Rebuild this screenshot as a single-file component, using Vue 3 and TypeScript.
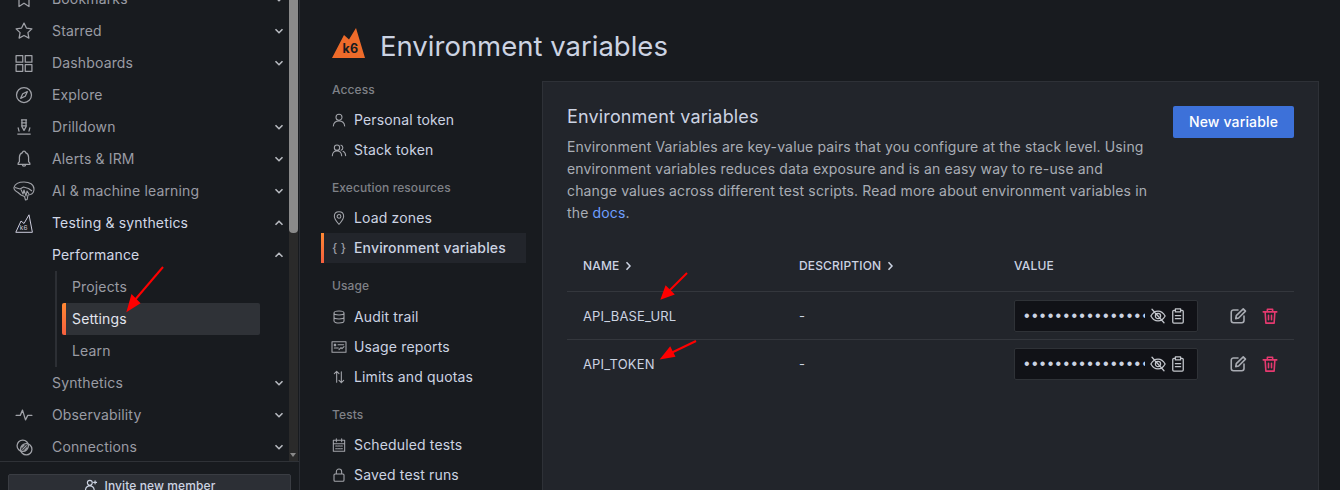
<script setup lang="ts">
interface NavItem { label: string; icon?: string; chevron?: 'up' | 'down'; active?: boolean }
const nav: NavItem[] = [
  { label: 'Bookmarks', icon: 'bookmark', chevron: 'down' },
  { label: 'Starred', icon: 'star', chevron: 'down' },
  { label: 'Dashboards', icon: 'apps', chevron: 'down' },
  { label: 'Explore', icon: 'compass' },
  { label: 'Drilldown', icon: 'drill', chevron: 'down' },
  { label: 'Alerts & IRM', icon: 'bell', chevron: 'down' },
  { label: 'AI & machine learning', icon: 'brain', chevron: 'down' },
  { label: 'Testing & synthetics', icon: 'k6', chevron: 'up', active: true },
]
const icons: Record<string, string> = {
  bookmark: 'M6 3h12v18l-6-4-6 4z',
  star: 'M12 2.500l2.900 6 6.600.9-4.800 4.600 1.200 6.500-5.900-3.100-5.900 3.100 1.200-6.500-4.800-4.600 6.600-.9z',
  apps: 'M2.500 3h8v8h-8zM13.500 3h8v8h-8zM2.500 14h8v8h-8zM13.500 14h8v8h-8z',
  compass: 'M12 3a9 9 0 1 0 0 18 9 9 0 0 0 0-18zM16 8l-2.500 5.500L8 16l2.500-5.500z',
  drill: 'M9 3.500h6M9 7h6M9 10.500h6M9.500 3v8.500l2.500 4.500 2.500-4.500V3M5 13l1 4M19 13l-1 4M4.500 20.500h15',
  bell: 'M12 2.500a1.800 1.800 0 0 1 1.800 1.800c2.500 1 3.700 3.200 3.700 5.700V15l1.500 2v1.500H5V17l1.500-2v-5c0-2.500 1.200-4.700 3.700-5.700A1.800 1.800 0 0 1 12 2.500zM10 18.500a2 2 0 0 0 4 0',
  user: 'M12 3.500a4.500 4.500 0 1 0 0 9 4.500 4.500 0 0 0 0-9zM3.500 21c.5-5 4-7.500 8.500-7.500s8 2.500 8.500 7.500',
  users: 'M9 4.500a4 4 0 1 0 0 8 4 4 0 0 0 0-8zM2 20.500c.3-4.500 3-7 7-7s6.700 2.500 7 7M15 4.700a4 4 0 0 1 0 7.600M18 14c2.400.8 3.700 3.200 4 6.500',
  pin: 'M12 2.500c-4.200 0-7 3-7 6.900 0 4.600 4.300 9 7 12.100 2.700-3.100 7-7.500 7-12.100 0-3.900-2.800-6.900-7-6.900zM12 6.800a2.800 2.800 0 1 0 0 5.600 2.800 2.800 0 0 0 0-5.600z',
  db: 'M4.500 6c0-1.700 3.300-3 7.500-3s7.500 1.300 7.500 3v12c0 1.700-3.300 3-7.500 3s-7.500-1.300-7.500-3zM4.500 6c0 1.700 3.300 3 7.500 3s7.500-1.300 7.500-3M4.500 12c0 1.700 3.300 3 7.500 3s7.500-1.300 7.500-3',
  report: 'M1.500 4h21v16h-21zM5 8h2v2H5zM10.500 8.500h8.500M5 13.500h6M12 16l3-3 1.500 1.500 3-3',
  updown: 'M8.500 20V3.500M5 7l3.500-3.500L12 7M15.500 4v16.500M12 17l3.500 3.500L19 17',
  calendar: 'M3.500 5h17v16.500h-17zM3.500 10h17M8 2.500V7M16 2.500V7M7 13.500h2.500M10.800 13.500h2.500M14.600 13.500h2.500M7 17.500h2.500M10.800 17.500h2.500M14.600 17.500h2.500',
  lock: 'M6 10.500h12a1.500 1.500 0 0 1 1.500 1.500v8a1.500 1.500 0 0 1-1.500 1.500H6A1.500 1.500 0 0 1 4.500 20v-8A1.500 1.500 0 0 1 6 10.500zM8 10.500V7a4 4 0 0 1 8 0v3.500',
}
interface SubItem { label: string; icon: string; active?: boolean }
interface SubGroup { title: string; items: SubItem[] }
const groups: SubGroup[] = [
  { title: 'Access', items: [{ label: 'Personal token', icon: 'user' }, { label: 'Stack token', icon: 'users' }] },
  { title: 'Execution resources', items: [{ label: 'Load zones', icon: 'pin' }, { label: 'Environment variables', icon: 'braces', active: true }] },
  { title: 'Usage', items: [{ label: 'Audit trail', icon: 'db' }, { label: 'Usage reports', icon: 'report' }, { label: 'Limits and quotas', icon: 'updown' }] },
  { title: 'Tests', items: [{ label: 'Scheduled tests', icon: 'calendar' }, { label: 'Saved test runs', icon: 'lock' }] },
]
const rows = ['API_BASE_URL', 'API_TOKEN']
const dots = '••••••••••••••••••••'
</script>

<template>
  <div class="page">
    <aside class="side">
      <div class="side-scroll">
        <div class="nav">
          <div v-for="n in nav" :key="n.label" class="nav-row" :class="{ on: n.active }">
            <span class="nav-icon">
              <svg v-if="n.icon === 'brain'" width="22" height="20" viewBox="0 0 22 20" fill="none" stroke="currentColor" stroke-width="1.100" stroke-linejoin="round">
                <path d="M1 6.500C2 3 6 1 11 1c5.500 0 10 2.500 10 7 0 2.800-1.500 4.800-3.500 5.500l-2.500.5-.8 4.500-1.700.5-1-3.500L8 14l-3-2.500C3 10.500.5 9 1 6.500z"/>
                <path d="M2 6.500l5 1.500 3.500-2 5 1.500 3.500 2.500M8 8.500l2 4.500 1-4 2 6 1-5 2 3"/>
              </svg>
              <svg v-else-if="n.icon === 'k6'" width="18" height="19" viewBox="0 0 18 19" fill="none" stroke="currentColor" stroke-width="1">
                <path d="M.8 18.300 6 7l3 2.500L14 .8l3.400 17.500z" stroke-linejoin="round"/>
                <text x="4.800" y="16" font-size="6.500" fill="currentColor" stroke="none" font-family="Inter, sans-serif">k6</text>
              </svg>
              <svg v-else width="20" height="20" viewBox="0 0 24 24" fill="none" stroke="currentColor" stroke-width="1.500" stroke-linejoin="round" stroke-linecap="round"><path :d="icons[n.icon ?? 'star']"/></svg>
            </span>
            <span class="nav-label">{{ n.label }}</span>
            <svg v-if="n.chevron" class="chev" :class="{ up: n.chevron === 'up' }" width="10" height="6" viewBox="0 0 10 6" fill="none" stroke="currentColor" stroke-width="1.600"><path d="M1.500 1.200 5 4.700l3.500-3.500"/></svg>
          </div>
          <div class="nav-row on sub">
            <span class="nav-label">Performance</span>
            <svg class="chev up" width="10" height="6" viewBox="0 0 10 6" fill="none" stroke="currentColor" stroke-width="1.600"><path d="M1.500 1.200 5 4.700l3.500-3.500"/></svg>
          </div>
          <div class="tree">
            <div class="leaf">Projects</div>
            <div class="leaf cur">Settings</div>
            <div class="leaf">Learn</div>
          </div>
          <div class="nav-row sub">
            <span class="nav-label">Synthetics</span>
            <svg class="chev" width="10" height="6" viewBox="0 0 10 6" fill="none" stroke="currentColor" stroke-width="1.600"><path d="M1.500 1.200 5 4.700l3.500-3.500"/></svg>
          </div>
          <div class="nav-row">
            <span class="nav-icon">
              <svg width="18" height="18" viewBox="0 0 24 24" fill="none" stroke="currentColor" stroke-width="1.700" stroke-linejoin="round" stroke-linecap="round"><path d="M1.500 12.500H7l3-7 4 13 3-6h5.500"/></svg>
            </span>
            <span class="nav-label">Observability</span>
            <svg class="chev" width="10" height="6" viewBox="0 0 10 6" fill="none" stroke="currentColor" stroke-width="1.600"><path d="M1.500 1.200 5 4.700l3.500-3.500"/></svg>
          </div>
          <div class="nav-row">
            <span class="nav-icon">
              <svg width="17" height="17" viewBox="0 0 24 24" fill="none" stroke="currentColor" stroke-width="1.800"><circle cx="9.500" cy="9.500" r="8"/><circle cx="14.500" cy="14.500" r="8"/><path d="M9 15l6-6M12 16l4-4M8 12l4-4"/></svg>
            </span>
            <span class="nav-label">Connections</span>
            <svg class="chev" width="10" height="6" viewBox="0 0 10 6" fill="none" stroke="currentColor" stroke-width="1.600"><path d="M1.500 1.200 5 4.700l3.500-3.500"/></svg>
          </div>
        </div>
        <div class="track">
          <div class="thumb"></div>
          <div class="track-arrow"></div>
        </div>
      </div>
      <div class="side-foot">
        <button class="invite">
          <svg width="14" height="14" viewBox="0 0 24 24" fill="none" stroke="currentColor" stroke-width="2" stroke-linecap="round"><path d="M10 4a4.200 4.200 0 1 0 0 8.400A4.200 4.200 0 0 0 10 4zM2.500 20.500c.5-4.500 3.500-7 7.500-7s7 2.500 7.500 7M19 5v5M16.500 7.500h5"/></svg>
          Invite new member
        </button>
      </div>
    </aside>

    <main class="main">
      <header class="head">
        <svg class="logo" width="33" height="30" viewBox="0 0 33 30">
          <path d="M0 30 12 7l5 4.500L24 0l9 30z" fill="#ee6b2a"/>
          <text x="10.500" y="25" font-size="12.500" font-weight="700" fill="#181b1f" font-family="Inter, sans-serif">k6</text>
        </svg>
        <h1>Environment variables</h1>
      </header>
      <div class="body">
        <nav class="subnav">
          <section v-for="g in groups" :key="g.title" class="group">
            <div class="group-title">{{ g.title }}</div>
            <div v-for="it in g.items" :key="it.label" class="sub-row" :class="{ cur: it.active }">
              <span v-if="it.icon === 'braces'" class="braces">{ }</span>
              <svg v-else width="16" height="16" viewBox="0 0 24 24" fill="none" stroke="currentColor" stroke-width="1.600" stroke-linejoin="round" stroke-linecap="round"><path :d="icons[it.icon]"/></svg>
              <span>{{ it.label }}</span>
            </div>
          </section>
        </nav>
        <section class="panel">
          <div class="panel-head">
            <div class="intro">
              <h2>Environment variables</h2>
              <p>Environment Variables are key-value pairs that you configure at the stack level. Using environment variables reduces data exposure and is an easy way to re-use and change values across different test scripts. Read more about environment variables in the <a>docs</a>.</p>
            </div>
            <button class="primary">New variable</button>
          </div>
          <div class="table">
            <div class="tr th">
              <div class="c1">NAME <svg width="7" height="10" viewBox="0 0 7 10" fill="none" stroke="currentColor" stroke-width="1.500"><path d="M1.500 1.200 5 5 1.500 8.800"/></svg></div>
              <div class="c2">DESCRIPTION <svg width="7" height="10" viewBox="0 0 7 10" fill="none" stroke="currentColor" stroke-width="1.500"><path d="M1.500 1.200 5 5 1.500 8.800"/></svg></div>
              <div class="c3">VALUE</div>
            </div>
            <div v-for="r in rows" :key="r" class="tr td">
              <div class="c1">{{ r }}</div>
              <div class="c2">-</div>
              <div class="c3">
                <div class="secret">
                  <span class="dots">{{ dots }}</span>
                  <svg width="18" height="18" viewBox="0 0 24 24" fill="none" stroke="#c3c6cc" stroke-width="1.700" stroke-linecap="round" stroke-linejoin="round"><path d="M2.500 12c2.500-4.500 5.800-6.500 9.500-6.500s7 2 9.500 6.500c-2.500 4.500-5.800 6.500-9.500 6.500S5 16.500 2.500 12zM12 8.500a3.500 3.500 0 1 0 0 7 3.500 3.500 0 0 0 0-7zM4 3l16 18"/></svg>
                  <svg width="18" height="18" viewBox="0 0 24 24" fill="none" stroke="#c3c6cc" stroke-width="1.700" stroke-linecap="round" stroke-linejoin="round"><path d="M8 4.500H6.500A1.500 1.500 0 0 0 5 6v14a1.500 1.500 0 0 0 1.500 1.500h11A1.500 1.500 0 0 0 19 20V6a1.500 1.500 0 0 0-1.500-1.500H16M8.500 2.500h7v4h-7zM8.500 11.500h7M8.500 15.500h7"/></svg>
                </div>
                <svg class="act" width="18" height="18" viewBox="0 0 24 24" fill="none" stroke="#a9acb3" stroke-width="2.100" stroke-linecap="round" stroke-linejoin="round"><path d="M12 4H6a3 3 0 0 0-3 3v11a3 3 0 0 0 3 3h11a3 3 0 0 0 3-3v-6M9 15.500l.7-4L19 2.500l3 3-9.200 9.200z"/></svg>
                <svg class="act del" width="18" height="18" viewBox="0 0 24 24" fill="none" stroke="#e5396f" stroke-width="2.100" stroke-linecap="round" stroke-linejoin="round"><path d="M3 6.500h18M8.500 6.500V3h7v3.500M5.500 6.500 6.500 21.500h11l1-15M10 11v6M14 11v6"/></svg>
              </div>
            </div>
          </div>
        </section>
      </div>
    </main>

    <svg class="arrows" width="1340" height="490" viewBox="0 0 1340 490" fill="none">
      <g stroke="#f00" stroke-width="2" fill="#f00">
        <path d="M163 267 134 301"/>
        <path d="M128 310 132 296 139 303z"/>
        <path d="M687 273 668 292"/>
        <path d="M662 298 666 287 673 294z"/>
        <path d="M696 341 671 353"/>
        <path d="M662 358 670 348 674 356z"/>
      </g>
    </svg>
  </div>
</template>

<style>
html, body { margin: 0; background: #181b1f; }
</style>

<style scoped>
.page {
  position: relative;
  width: 1340px;
  height: 490px;
  display: flex;
  overflow: hidden;
  background: #181b1f;
  color: #ccccdc;
  font-family: Inter, "Noto Sans", sans-serif;
  font-size: 14px;
  line-height: 20px;
  letter-spacing: .15px;
}
.side {
  width: 300px;
  flex: none;
  display: flex;
  flex-direction: column;
  border-right: 1px solid #2a2d33;
  box-sizing: border-box;
}
.side-scroll { flex: 1; min-height: 0; display: flex; overflow: hidden; border-bottom: 1px solid #2f3237; }
.nav { flex: 1; margin-top: -17px; min-width: 0; }
.nav-row { height: 32px; display: flex; align-items: center; color: #9a9ca4; }
.nav-row.on { color: #d2d8e6; }
.nav-icon { width: 48px; margin-right: 4px; display: flex; justify-content: center; color: #a0a2a8; flex: none; }
.nav-row.on .nav-icon { color: #ccccdc; }
.nav-label { flex: 1; }
.nav-row.sub { padding-left: 52px; }
.chev { margin-right: 5px; color: #b8bbc1; }
.chev.up { transform: rotate(180deg); }
.tree { margin-left: 55px; border-left: 2px solid #2c2f34; }
.leaf { height: 32px; display: flex; align-items: center; padding-left: 10px; margin-left: 5px; width: 198px; box-sizing: border-box; color: #9a9ca4; border-radius: 2px; }
.leaf.cur { color: #e2e5ee; background: linear-gradient(#ff8833, #f55f3e) left / 4px 100% no-repeat, #2f3237; }
.track { width: 9px; margin-right: 1px; background: #2a2a2a; position: relative; }
.thumb { position: absolute; top: 0; left: 0; right: 0; height: 233px; background: #8a8a8a; border-radius: 0 0 4px 4px; }
.track-arrow { position: absolute; left: 1px; bottom: 4px; width: 0; height: 0; border-left: 3.500px solid transparent; border-right: 3.500px solid transparent; border-top: 4px solid #8a8a8a; }
.side-foot { height: 28px; padding: 12px 8px 0; box-sizing: border-box; flex: none; }
.invite { width: 283px; height: 32px; margin: 0; display: flex; align-items: flex-start; justify-content: center; gap: 7px; background: #2c2f35; border: 1px solid #3a3d43; border-radius: 2px; color: #ccd3e2; font: 500 12px/16px Inter, sans-serif; letter-spacing: .1px; padding: 3px 0 0; }
.main { flex: 1; min-width: 0; display: flex; flex-direction: column; }
.head { display: flex; align-items: flex-start; gap: 15px; padding: 28px 0 0 32px; height: 64px; box-sizing: border-box; margin-bottom: 17px; }
.logo { flex: none; }
h1 { margin: 2px 0 0; font-size: 27.500px; line-height: 32px; font-weight: 400; color: #ccd3e2; letter-spacing: 0; }
.body { display: flex; padding-left: 21px; flex: 1; min-height: 0; }
.subnav { width: 205px; flex: none; margin-right: 16px; }
.group { margin-bottom: 14px; }
.group:nth-child(3) .group-title { margin-bottom: 7px; }
.group-title { height: 18px; line-height: 18px; padding-left: 11px; font-size: 12px; font-weight: 500; color: #7f8187; margin-bottom: 6px; letter-spacing: .1px; }
.sub-row { height: 30px; display: flex; align-items: center; gap: 7px; padding-left: 10px; color: #ccd3e2; }
.sub-row svg { color: #a3a5ab; flex: none; }
.sub-row.cur { background: linear-gradient(#ff8833, #f55f3e) left / 3px 100% no-repeat, #22252b; font-weight: 500; }
.braces { width: 16px; color: #9a9ca4; font-size: 12px; flex: none; text-align: center; white-space: nowrap; }
.panel { width: 777px; flex: none; box-sizing: border-box; background: #22252b; border: 1px solid #2e3137; border-bottom: 0; padding: 23px 24px 24px; }
.panel-head { display: flex; justify-content: space-between; align-items: flex-start; margin-top: 0; }
.primary { margin-top: 1px; }
.intro { width: 590px; }
h2 { margin: 0; font-size: 18px; line-height: 24px; font-weight: 400; color: #ccd3e2; }
.intro p { margin: 7px 0 0; line-height: 22px; color: #a9adb5; }
.intro a { color: #6e9fff; }
.primary { width: 121px; height: 32px; background: #3d71d9; color: #fff; border: 0; border-radius: 2px; font: 500 14px/20px Inter, sans-serif; letter-spacing: .15px; flex: none; }
.table { margin-top: 17px; }
.tr { display: flex; align-items: center; }
.th { height: 50px; font-size: 12px; font-weight: 500; color: #ccd3e2; }
.td { height: 48px; border-top: 1px solid #34373d; box-sizing: border-box; font-size: 13px; color: #ccd3e2; }
.c1 { width: 232px; padding-left: 16px; box-sizing: border-box; flex: none; display: flex; align-items: center; gap: 6px; }
.c2 { width: 215px; box-sizing: border-box; flex: none; display: flex; align-items: center; gap: 6px; }
.c3 { flex: 1; display: flex; align-items: center; }
.secret { width: 184px; height: 32px; box-sizing: border-box; background: #111217; border: 1px solid #2f3237; border-radius: 2px; display: flex; align-items: center; padding-left: 9px; gap: 2px; }
.dots { width: 121px; margin-right: 2px; overflow: hidden; white-space: nowrap; flex: none; font-size: 16px; letter-spacing: 2.300px; color: #ccd3e2; font-family: "Liberation Sans", sans-serif; }
.act { margin-left: 31px; flex: none; }
.act.del { margin-left: 14px; }
.arrows { position: absolute; inset: 0; pointer-events: none; }
</style>
